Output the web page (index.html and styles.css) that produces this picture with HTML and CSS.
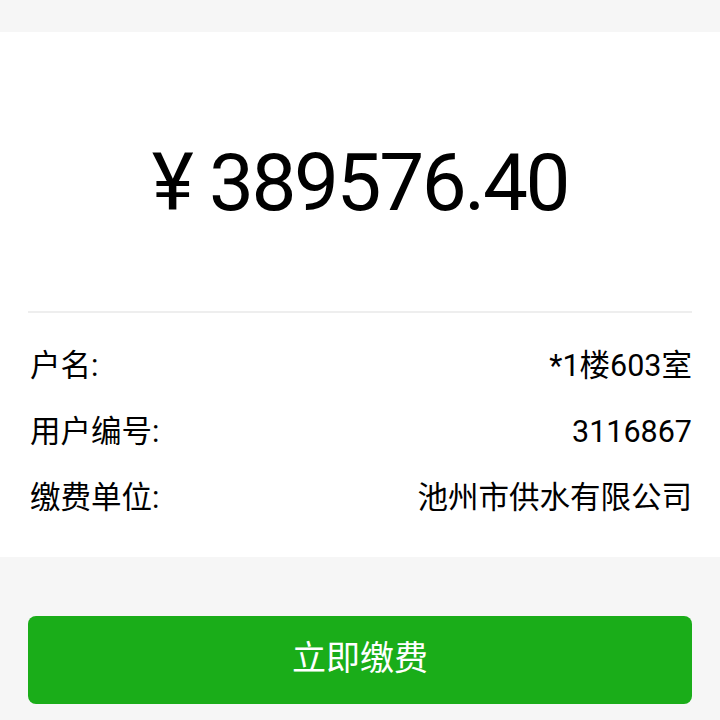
FILE: index.html
```html
<!DOCTYPE html>
<html>
<head>
<meta charset="UTF-8">
<title>缴费</title>
<link rel="stylesheet" href="styles.css">
</head>
<body>
<div class="card">
    <div class="amount">¥ 389576.40</div>
    <div class="info">
        <div class="row"><span class="label">户名:</span><span class="value">*1楼603室</span></div>
        <div class="row"><span class="label">用户编号:</span><span class="value">3116867</span></div>
        <div class="row"><span class="label">缴费单位:</span><span class="value">池州市供水有限公司</span></div>
    </div>
</div>
<div class="actions">
    <div class="pay-button">立即缴费</div>
</div>
</body>
</html>
```

FILE: styles.css
```css
body {
margin: 0;
background: #f6f6f6;
font-family: Roboto, "Noto Sans CJK SC", sans-serif;
color: #000000;
}
.card {
margin-top: 32px;
background: #FFFFFF;
}
.amount {
font-size: 80px;
line-height: 80px;
letter-spacing: -2.4px;
text-align: center;
padding-top: 111px;
padding-bottom: 88px;
margin: 0 28px;
border-bottom: 2px solid #eeeeee;
}
.info {
padding: 20px 28px 26px 30px;
}
.row {
display: flex;
justify-content: space-between;
font-size: 30.5px;
line-height: 66px;
}
.actions {
padding: 59px 28px 16px 28px;
}
.pay-button {
background: #1aad19;
color: #FFFFFF;
border-radius: 8px;
height: 88px;
line-height: 84px;
text-align: center;
font-size: 34px;
}
```
